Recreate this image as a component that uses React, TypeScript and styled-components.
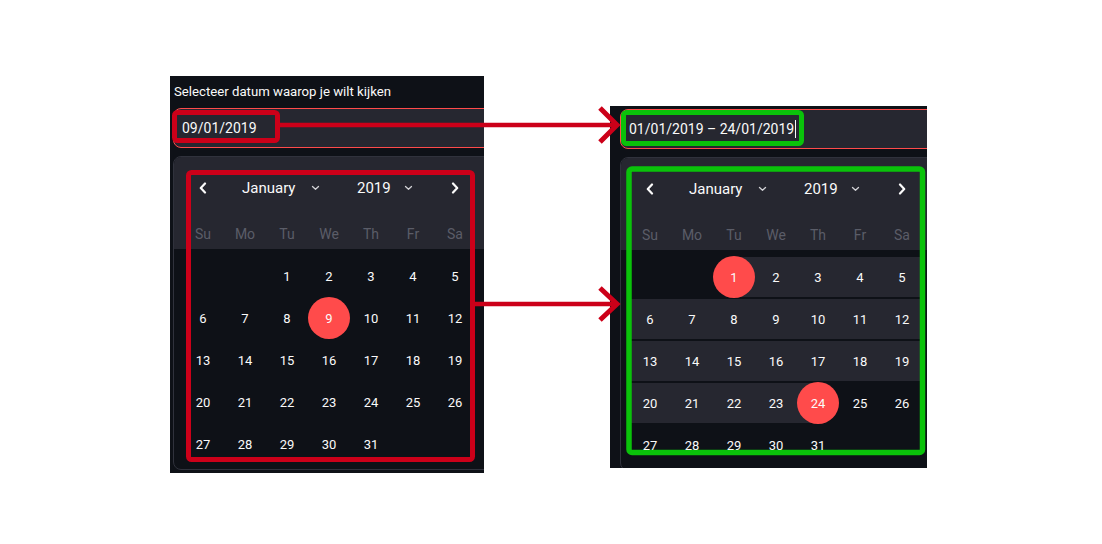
import React from 'react';
import styled, { createGlobalStyle, css } from 'styled-components';

const Global = createGlobalStyle`
  html, body { margin: 0; padding: 0; background: #ffffff; }
  body { font-family: Roboto, "Noto Sans", sans-serif; }
`;

const Canvas = styled.div`
  position: relative;
  width: 1102px;
  height: 544px;
  box-sizing: border-box;
  padding: 76px 0 0 170px;
  display: flex;
  align-items: flex-start;
  gap: 126px;
  background: #ffffff;
  overflow: hidden;
`;

const Shot = styled.div<{ $w: number; $h: number; $top: number; $pad: string }>`
  flex-shrink: 0;
  width: ${(p) => p.$w}px;
  height: ${(p) => p.$h}px;
  margin-top: ${(p) => p.$top}px;
  padding: ${(p) => p.$pad};
  box-sizing: border-box;
  background: #0e1117;
  overflow: hidden;
  display: flex;
  flex-direction: column;
`;

const Label = styled.div`
  margin: 6px 0 6px 1px;
  height: 20px;
  line-height: 20px;
  font-size: 13.2px;
  color: #fafafa;
  white-space: nowrap;
`;

const Input = styled.div`
  flex-shrink: 0;
  width: 340px;
  height: 40px;
  box-sizing: border-box;
  border: 1px solid #ff4b4b;
  border-radius: 8px;
  background: #262730;
  padding: 0 8px;
  display: flex;
  align-items: center;
  font-size: 14px;
  color: #fafafa;
  white-space: nowrap;
`;

const Caret = styled.span`
  display: inline-block;
  width: 1px;
  height: 18px;
  margin-left: 1px;
  background: #fafafa;
`;

const Popover = styled.div`
  flex-shrink: 0;
  margin-top: 8px;
  width: 320px;
  box-sizing: border-box;
  border: 1px solid #30323c;
  border-radius: 8px;
  background: #0e1117;
  overflow: hidden;
  padding-bottom: 4px;
`;

const Header = styled.div`
  background: #262730;
  padding: 12px 0 0 8px;
`;

const NavRow = styled.div`
  width: 294px;
  height: 38px;
  display: flex;
  align-items: center;
`;

const NavButton = styled.div<{ $push?: boolean }>`
  width: 42px;
  height: 38px;
  display: flex;
  align-items: center;
  justify-content: center;
  ${(p) => p.$push && css`margin-left: auto;`}
`;

const Select = styled.div<{ $ml: number; $w: number }>`
  margin-left: ${(p) => p.$ml}px;
  width: ${(p) => p.$w}px;
  display: flex;
  align-items: center;
  justify-content: space-between;
  font-size: 15px;
  color: #fafafa;
`;

const Grid = styled.div`
  display: grid;
  grid-template-columns: repeat(7, 42px);
`;

const WeekDay = styled.div`
  height: 31px;
  margin-top: 11px;
  display: flex;
  align-items: center;
  justify-content: center;
  font-size: 14px;
  color: #5b5d68;
`;

const Body = styled.div`
  padding: 6px 0 0 8px;
`;

type Band = 'none' | 'mid' | 'start' | 'end';

const DayCell = styled.div<{ $band: Band; $sel: boolean }>`
  position: relative;
  height: 42px;
  display: flex;
  align-items: center;
  justify-content: center;
  font-size: 13px;
  color: #fafafa;
  &::before {
    content: '';
    position: absolute;
    top: 1px;
    bottom: 1px;
    left: ${(p) => (p.$band === 'start' ? '50%' : '0')};
    right: ${(p) => (p.$band === 'end' ? '50%' : '0')};
    background: #262730;
    display: ${(p) => (p.$band === 'none' ? 'none' : 'block')};
  }
  &::after {
    content: '';
    position: absolute;
    inset: 0;
    border-radius: 50%;
    background: #ff4b4b;
    display: ${(p) => (p.$sel ? 'block' : 'none')};
  }
`;

const DayNum = styled.span`
  position: relative;
  z-index: 1;
`;

const Overlay = styled.svg`
  position: absolute;
  left: 0;
  top: 0;
  pointer-events: none;
`;

const WEEK = ['Su', 'Mo', 'Tu', 'We', 'Th', 'Fr', 'Sa'];

const Chevron = ({ dir }: { dir: 'l' | 'r' }) => (
  <svg width="8" height="12" viewBox="0 0 8 12">
    <polyline
      points={dir === 'l' ? '6,1.5 1.8,6 6,10.5' : '2,1.5 6.2,6 2,10.5'}
      fill="none"
      stroke="#fafafa"
      strokeWidth="2.2"
      strokeLinecap="round"
      strokeLinejoin="round"
    />
  </svg>
);

const Caretdown = () => (
  <svg width="9" height="6" viewBox="0 0 9 6">
    <polyline points="1.5,1.5 4.5,4.3 7.5,1.5" fill="none" stroke="#d0d0d4" strokeWidth="1.3" strokeLinecap="round" strokeLinejoin="round" />
  </svg>
);

type CalProps = { selected: number[]; range?: [number, number] };

const Calendar = ({ selected, range }: CalProps) => {
  const cells: (number | null)[] = [null, null];
  for (let d = 1; d <= 31; d++) cells.push(d);
  const bandOf = (d: number | null): Band => {
    if (!range || d === null) return 'none';
    if (d === range[0]) return 'start';
    if (d === range[1]) return 'end';
    if (d > range[0] && d < range[1]) return 'mid';
    return 'none';
  };
  return (
    <Popover>
      <Header>
        <NavRow>
          <NavButton>
            <Chevron dir="l" />
          </NavButton>
          <Select $ml={18} $w={78}>
            <span>January</span>
            <Caretdown />
          </Select>
          <Select $ml={37} $w={56}>
            <span>2019</span>
            <Caretdown />
          </Select>
          <NavButton $push>
            <Chevron dir="r" />
          </NavButton>
        </NavRow>
        <Grid>
          {WEEK.map((w) => (
            <WeekDay key={w}>{w}</WeekDay>
          ))}
        </Grid>
      </Header>
      <Body>
        <Grid>
          {cells.map((d, i) => (
            <DayCell key={i} $band={bandOf(d)} $sel={d !== null && selected.includes(d)}>
              {d !== null && <DayNum>{d}</DayNum>}
            </DayCell>
          ))}
        </Grid>
      </Body>
    </Popover>
  );
};

const RED = '#cc0019';
const GREEN = '#0ac20a';

export default function App() {
  return (
    <>
      <Global />
      <Canvas>
        <Shot $w={314} $h={397} $top={0} $pad="0 0 0 3px">
          <Label>Selecteer datum waarop je wilt kijken</Label>
          <Input>09/01/2019</Input>
          <Calendar selected={[9]} />
        </Shot>
        <Shot $w={317} $h={362} $top={30} $pad="3px 0 0 10px">
          <Input>
            01/01/2019 – 24/01/2019
            <Caret />
          </Input>
          <Calendar selected={[1, 24]} range={[1, 24]} />
        </Shot>
        <Overlay width="1102" height="544" viewBox="0 0 1102 544">
          <rect x="174.5" y="112.5" width="103" height="28" rx="3" fill="none" stroke={RED} strokeWidth="5" />
          <rect x="188.5" y="172.5" width="284" height="287" rx="3" fill="none" stroke={RED} strokeWidth="5" />
          <line x1="280" y1="125" x2="616" y2="125" stroke={RED} strokeWidth="4.5" />
          <polyline points="600,108 617,125 600,142" fill="none" stroke={RED} strokeWidth="5" />
          <line x1="475" y1="304" x2="616" y2="304" stroke={RED} strokeWidth="4.5" />
          <polyline points="600,288 617,304 600,320" fill="none" stroke={RED} strokeWidth="5" />
          <rect x="623.5" y="112.5" width="178" height="31" rx="3" fill="none" stroke={GREEN} strokeWidth="5" />
          <rect x="629" y="169" width="293.5" height="283.5" rx="3" fill="none" stroke={GREEN} strokeWidth="5.5" />
        </Overlay>
      </Canvas>
    </>
  );
}
